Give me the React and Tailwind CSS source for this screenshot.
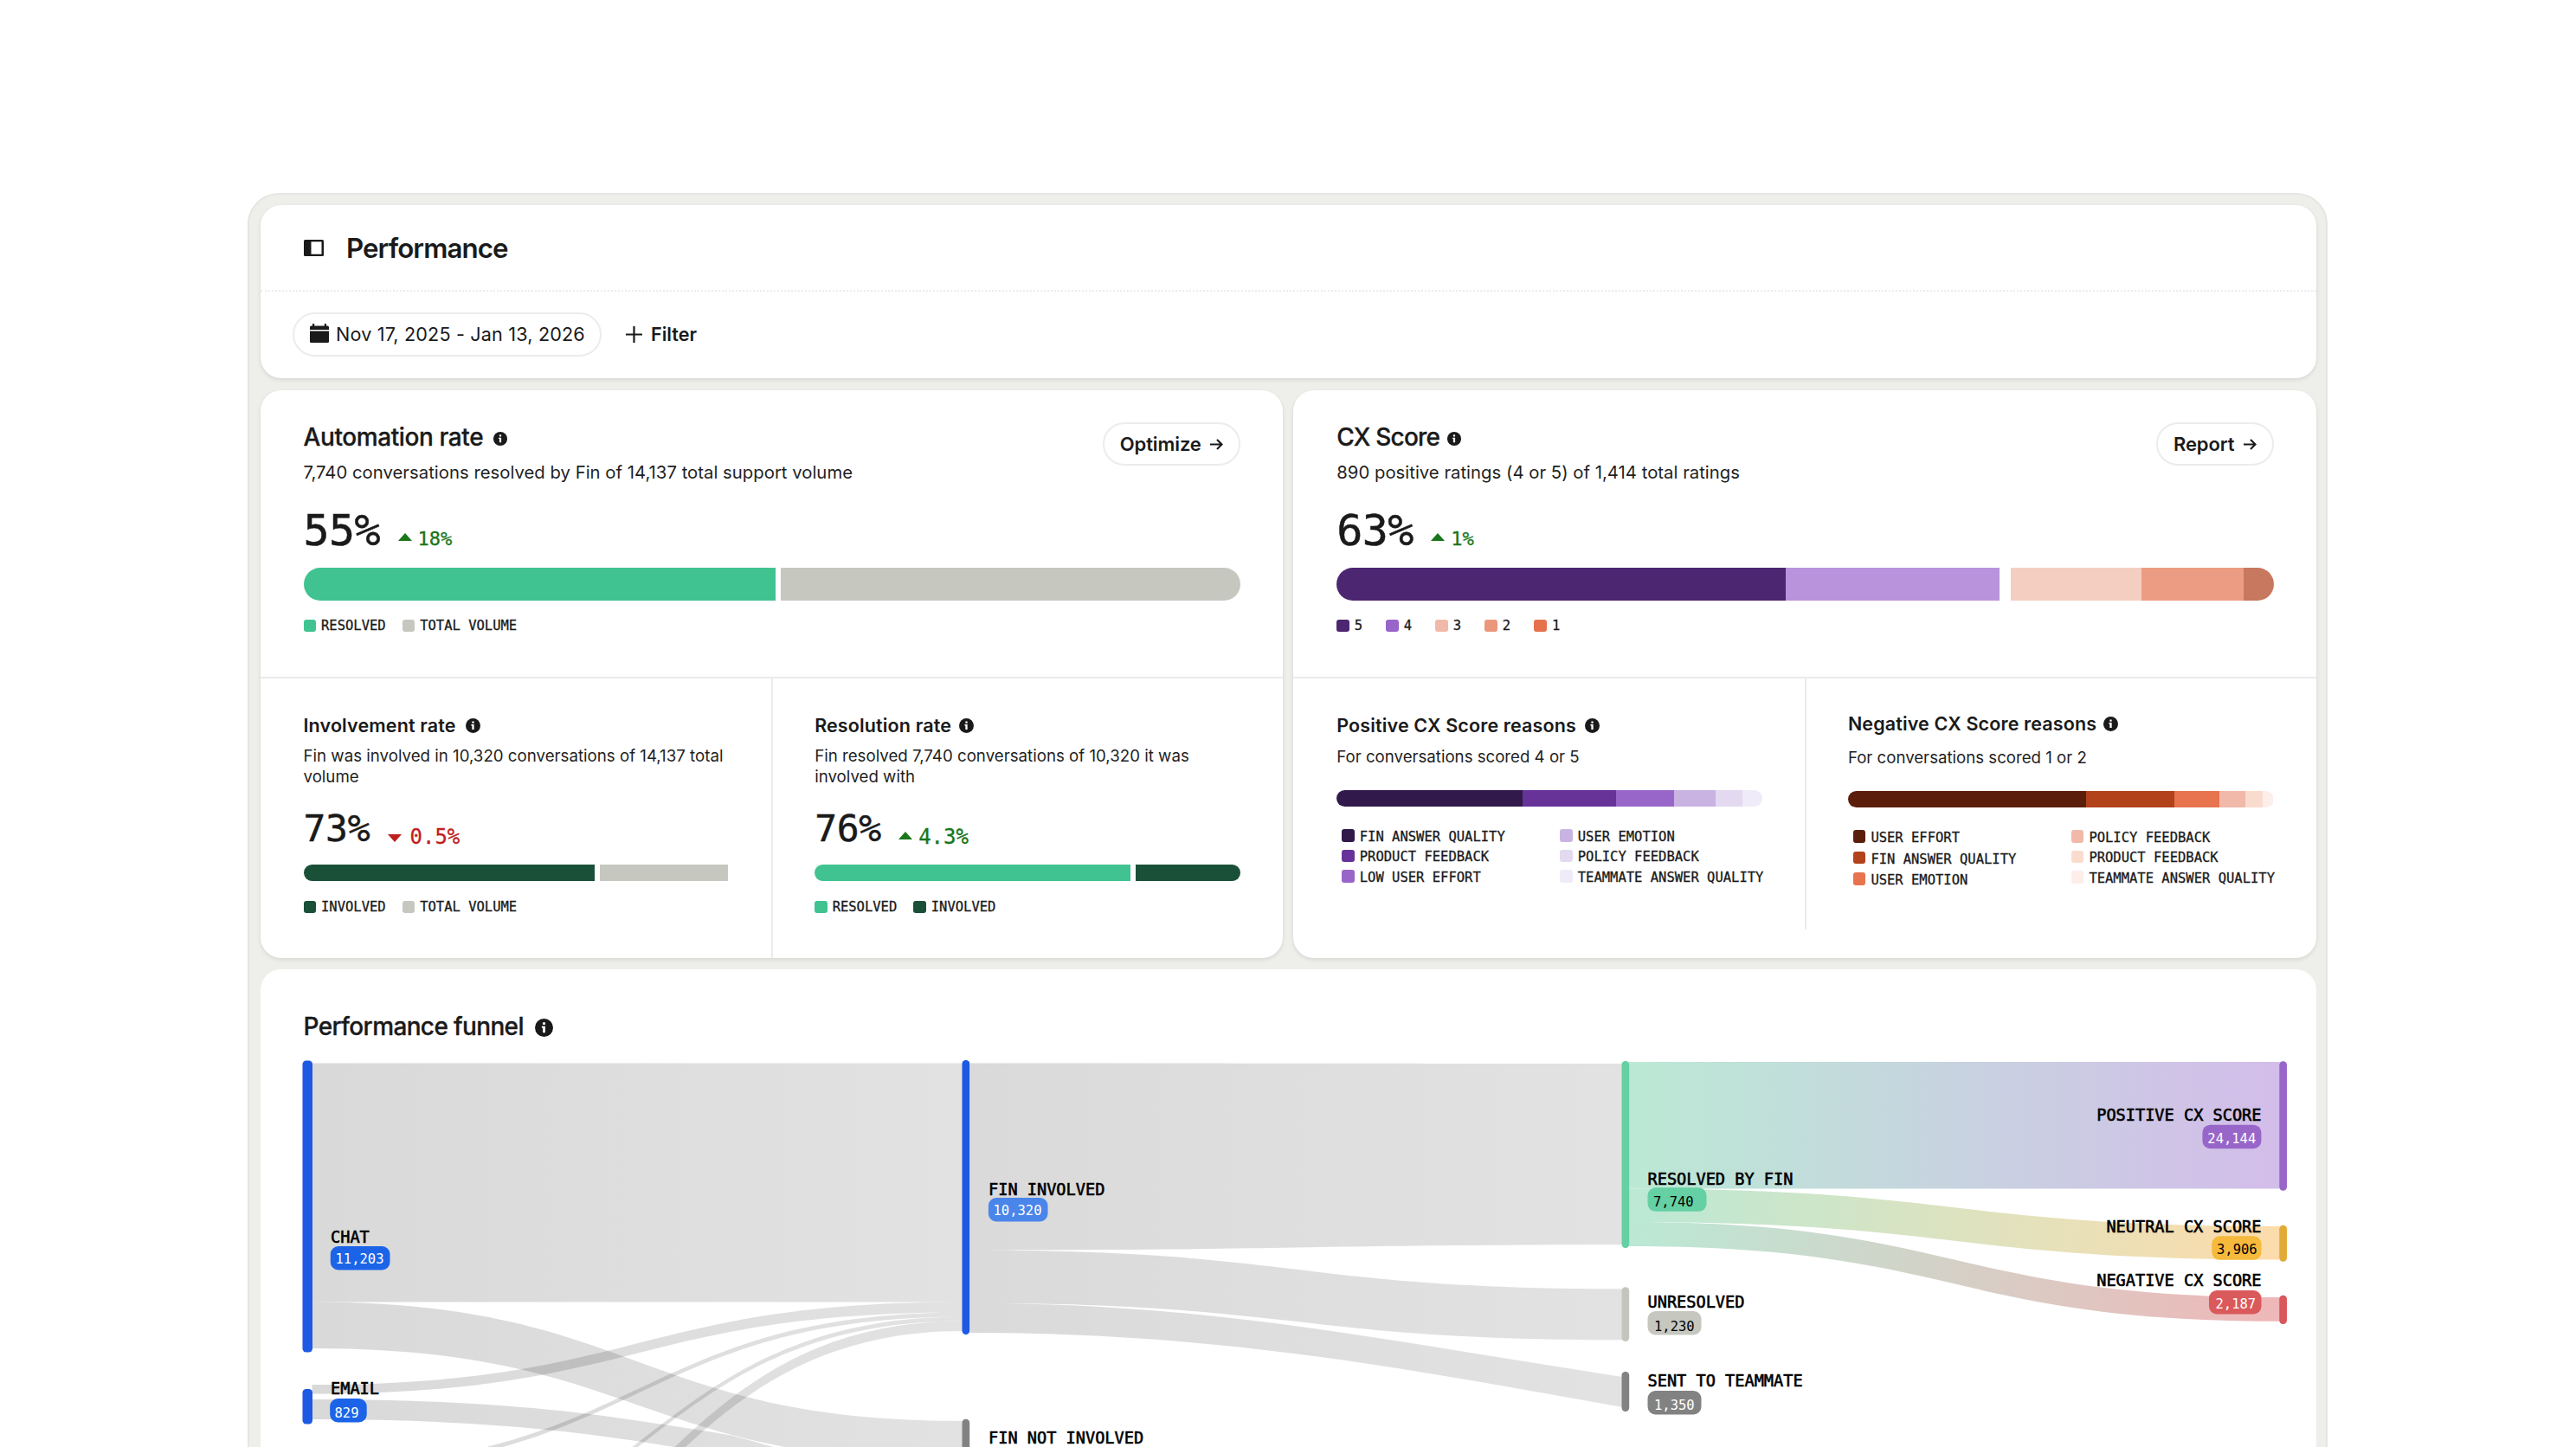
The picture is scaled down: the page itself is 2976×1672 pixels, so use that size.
const mono = "font-['DejaVu_Sans_Mono',monospace]"

const InfoIcon = ({ className }) => (
  <svg viewBox="0 0 16 16" className={className}>
    <circle cx="8" cy="8" r="8" fill="#1a1a1a" />
    <rect x="6.9" y="3.2" width="2.2" height="2.2" rx="0.4" fill="#fff" />
    <path d="M6 6.7h3.1v5.6H6.9V8.1H6z" fill="#fff" />
  </svg>
)

const ArrowRight = () => (
  <svg viewBox="0 0 15 13" className="w-[15px] h-[13px]" fill="none" stroke="#1a1a1a" strokeWidth="2.1">
    <path d="M0 6.5h13.4M8 0.9l5.6 5.6L8 12.1" />
  </svg>
)

const Swatch = ({ color, className }) => (
  <span className={`w-[14.5px] h-[14.5px] rounded-[3px] shrink-0 ${className}`} style={{ backgroundColor: color }} />
)

const LegendItem = ({ color, label, swatchClass = "" }) => (
  <div className="flex items-center gap-[6px] h-4">
    <Swatch color={color} className={swatchClass} />
    <span className={`${mono} text-[15.5px] leading-4 text-[#1a1a1a] whitespace-nowrap [-webkit-text-stroke:0.3px_#1a1a1a]`}>{label}</span>
  </div>
)

// parts: [width, color] pairs, a null color leaves a gap
const Bar = ({ parts, className }) => (
  <div className={`flex rounded-full overflow-hidden ${className}`}>
    {parts.map(([width, color], i) => (
      <div key={i} className="h-full shrink-0" style={{ width, backgroundColor: color || "#fff" }} />
    ))}
  </div>
)

const Triangle = ({ up, className }) => (
  <svg viewBox="0 0 16 9" className={`w-4 h-[9px] relative ${className}`}>
    <path d={up ? "M0 9L8 0l8 9z" : "M0 0h16L8 9z"} fill={up ? "#19761a" : "#c01f1f"} />
  </svg>
)

const PillButton = ({ children }) => (
  <button className="h-[50px] rounded-full border-2 border-[#ececec] flex items-center gap-[10px] pl-[17.5px] pr-[18px] text-[22px] font-semibold text-[#1a1a1a] tracking-[-0.1px]">
    {children}
    <ArrowRight />
  </button>
)

const ScoreCard = ({ title, titleClass, description, action, value, delta, parts, legend, legendGap, children }) => (
  <section className="bg-white rounded-[24px] h-[656px] shadow-[0_2px_5px_rgba(0,0,0,0.1)] flex flex-col">
    <div className="h-[333px] border-b-2 border-[#ebebeb] pl-[50px] pr-[49px] pt-[37px]">
      <div className="flex justify-between items-start h-[108px]">
        <div>
          <div className={`flex items-center ${titleClass}`}>
            <h2 className="text-[28px] leading-[34px] font-medium text-[#1a1a1a] [-webkit-text-stroke:0.3px_#1a1a1a]">{title}</h2>
            <InfoIcon className="w-4 h-4 mt-1" />
          </div>
          <p className="mt-[10px] text-[20.3px] leading-7 text-[#1f1f1f] tracking-[0.02px]">{description}</p>
        </div>
        <PillButton>{action}</PillButton>
      </div>
      <div className={`${mono} mt-[-8px] h-[50px] flex items-baseline text-[#1a1a1a]`}>
        <span className="text-[50px] leading-[50px] w-[109px] tracking-[-0.6px] [-webkit-text-stroke:0.5px_#1a1a1a]">{value}</span>
        <Triangle up className="bottom-[5px]" />
        <span className="text-[22px] leading-none text-[#19761a] ml-[7px] [-webkit-text-stroke:0.3px_#19761a]">{delta}</span>
      </div>
      <Bar parts={parts} className="mt-[18px] h-[38px]" />
      <div className={`mt-[21px] flex ${legendGap}`}>
        {legend.map(([label, color]) => <LegendItem key={label} label={label} color={color} />)}
      </div>
    </div>
    <div className="grid grid-cols-2 flex-1">{children}</div>
  </section>
)

const CellTitle = ({ title, iconGap }) => (
  <div className={`flex items-center ${iconGap}`}>
    <h3 className="text-[21.5px] leading-[26px] font-semibold text-[#1a1a1a] tracking-[0.14px] whitespace-nowrap">{title}</h3>
    <InfoIcon className="w-[17px] h-[17px] mt-px" />
  </div>
)

const RateCell = ({ title, iconGap, description, value, delta, up, parts, legend, className }) => (
  <div className={`pt-[41px] ${className}`}>
    <CellTitle title={title} iconGap={iconGap} />
    <p className="mt-[10.5px] w-[492px] text-[18.7px] leading-6 text-[#1f1f1f]">{description}</p>
    <div className={`${mono} mt-[26.5px] h-[43px] flex items-baseline text-[#1a1a1a]`}>
      <span className="text-[43px] leading-[43px] w-[97px] tracking-[-0.3px] [-webkit-text-stroke:0.5px_#1a1a1a]">{value}</span>
      <Triangle up={up} className={up ? "bottom-[2px]" : "top-px"} />
      <span className={`relative top-[3px] text-[24px] leading-none ${up ? "ml-[7px] text-[#19761a] [-webkit-text-stroke:0.3px_#19761a]" : "ml-[10px] text-[#c01f1f] [-webkit-text-stroke:0.3px_#c01f1f]"}`}>{delta}</span>
    </div>
    <Bar parts={parts} className="mt-5 h-[19px]" />
    <div className="mt-[22px] flex gap-[19px]">
      {legend.map(([label, color]) => <LegendItem key={label} label={label} color={color} />)}
    </div>
  </div>
)

const ReasonCell = ({ title, iconGap, textGap, leftRows, description, parts, columns, className }) => (
  <div className={`pr-[49px] ${className}`}>
    <CellTitle title={title} iconGap={iconGap} />
    <p className={`text-[18.65px] leading-6 text-[#1f1f1f] ${textGap}`}>{description}</p>
    <Bar parts={parts} className="mt-[27px] h-[19px]" />
    <div className="mt-[27px] ml-[6px] flex">
      {columns.map((col, i) => (
        <div key={i} className={`w-[252px] shrink-0 flex flex-col ${i === 0 ? leftRows : "gap-[7.4px]"}`}>
          {col.map(([label, color]) => <LegendItem key={label} label={label} color={color} swatchClass="-mt-[3px]" />)}
        </div>
      ))}
    </div>
  </div>
)

// ribbon between two columns, y0/y1 are the edges on the left, y2/y3 on the right
const ribbon = (x0, y0, y1, x1, y2, y3) => {
  const m = (x0 + x1) / 2
  return `M${x0} ${y0}C${m} ${y0} ${m} ${y2} ${x1} ${y2}V${y3}C${m} ${y3} ${m} ${y1} ${x0} ${y1}Z`
}

const links = [
  [ribbon(360, 1228.5, 1504.5, 1112, 1228.5, 1504.5), "gray1"],
  [ribbon(360, 1504.5, 1558, 1112, 1642, 1689), "gray1"],
  [ribbon(360, 1600, 1610.5, 1112, 1504.5, 1516.5), "gray1"],
  ["M360 1617C610 1617 720 1639 844 1658.5L870 1665.5L900 1674H790C680 1655 560 1640 360 1640Z", "gray1"],
  [ribbon(360, 1694, 1699, 1112, 1516.5, 1521.5), "gray1"],
  [ribbon(360, 1813, 1818, 1112, 1521.5, 1526.5), "gray1"],
  [ribbon(360, 1902, 1914, 1112, 1526.5, 1538), "gray1"],
  [ribbon(1120, 1228.5, 1444.5, 1874, 1229, 1438.3), "gray2"],
  [ribbon(1120, 1444.5, 1505.7, 1874, 1489.3, 1548.3), "gray2"],
  ["M1120 1505.7C1400 1505.7 1600 1549 1874 1591V1626C1600 1577 1400 1540 1120 1540Z", "gray2"],
  [ribbon(1881, 1227, 1373.5, 2633, 1227, 1373.5), "positive"],
  [ribbon(1881, 1373.5, 1412, 2633, 1417, 1455.5), "neutral"],
  [ribbon(1881, 1412, 1440, 2633, 1499, 1526.7), "negative"],
]

const gradients = [
  ["gray1", 360, 1112, "rgba(0,0,0,0.15)", "rgba(0,0,0,0.115)"],
  ["gray2", 1120, 1874, "rgba(0,0,0,0.145)", "rgba(0,0,0,0.115)"],
  ["positive", 1881, 2633, "#bbe9d5", "#d3bdea"],
  ["neutral", 1881, 2633, "#bbe9d5", "#fddcab"],
  ["negative", 1881, 2633, "#bbe9d5", "#efb7b8"],
]

// x, top, bottom, width, color
const nodes = [
  [349, 1225.5, 1562.5, 11.5, "#1d59e3"],
  [349, 1605, 1645.5, 11.5, "#1d59e3"],
  [1111, 1225, 1542, 8.7, "#1d59e3"],
  [1111, 1639.7, 1700, 8.7, "#828282"],
  [1873, 1226, 1442, 8.7, "#65d0a3"],
  [1873, 1487.3, 1550, 8.7, "#c4c6be"],
  [1873, 1585, 1631, 8.7, "#828282"],
  [2632.7, 1226.3, 1375.7, 8.8, "#9866c9"],
  [2632.7, 1415.7, 1457.7, 8.8, "#e2ab37"],
  [2632.7, 1496.7, 1530, 8.8, "#d9585b"],
]

const labels = [
  { text: "CHAT", x: 381.5, y: 1436, badge: [381.3, 1440, 68.7], value: "11,203", vx: 387, vy: 1460, bg: "#1b64e8", color: "#fff" },
  { text: "EMAIL", x: 381.5, y: 1611, badge: [380.7, 1616, 42.5], value: "829", vx: 386, vy: 1638.3, bg: "#1b64e8", color: "#fff" },
  { text: "FIN INVOLVED", x: 1141.5, y: 1381, badge: [1141.4, 1384, 68.6], value: "10,320", vx: 1147, vy: 1404.3, bg: "#4a85ea", color: "#fff" },
  { text: "FIN NOT INVOLVED", x: 1141.5, y: 1668.3 },
  { text: "RESOLVED BY FIN", x: 1903, y: 1368.7, badge: [1903, 1372.3, 68], value: "7,740", vx: 1909.5, vy: 1393.7, bg: "#65d0a3", color: "#000" },
  { text: "UNRESOLVED", x: 1903, y: 1510.7, badge: [1903, 1515, 62], value: "1,230", vx: 1910.5, vy: 1537.7, bg: "#c6c8c0", color: "#000" },
  { text: "SENT TO TEAMMATE", x: 1903, y: 1602.3, badge: [1903, 1607, 62], value: "1,350", vx: 1910.5, vy: 1629.3, bg: "#828282", color: "#fff" },
  { text: "POSITIVE CX SCORE", x: 2612, y: 1295.3, end: true, badge: [2543.9, 1299.7, 68], value: "24,144", vx: 2549.8, vy: 1321, bg: "#9866c9", color: "#fff" },
  { text: "NEUTRAL CX SCORE", x: 2612, y: 1424, end: true, badge: [2554.8, 1428.3, 57.2], value: "3,906", vx: 2560.5, vy: 1449, bg: "#f6b93b", color: "#000" },
  { text: "NEGATIVE CX SCORE", x: 2612, y: 1486.3, end: true, badge: [2551.5, 1491, 60.5], value: "2,187", vx: 2559, vy: 1511.7, bg: "#da5a5c", color: "#fff" },
]

const Funnel = () => (
  <svg viewBox="300.5 1210 2375 462" className="w-[2375px] h-[462px] block">
    <defs>
      {gradients.map(([id, x1, x2, from, to]) => (
        <linearGradient key={id} id={id} gradientUnits="userSpaceOnUse" x1={x1} x2={x2} y1="0" y2="0">
          <stop offset="0" stopColor={from} />
          <stop offset="1" stopColor={to} />
        </linearGradient>
      ))}
    </defs>
    {links.map(([d, fill], i) => <path key={i} d={d} fill={`url(#${fill})`} />)}
    {nodes.map(([x, top, bottom, width, fill]) => (
      <rect key={`${x}-${top}`} x={x} y={top} width={width} height={bottom - top} rx="4.2" fill={fill} />
    ))}
    {labels.map((l) => (
      <g key={l.text} className={mono}>
        <text x={l.x} y={l.y} textAnchor={l.end ? "end" : "start"} className="text-[18.6px]" stroke="#000" strokeWidth="0.6">{l.text}</text>
        {l.badge && (
          <>
            <rect x={l.badge[0]} y={l.badge[1]} width={l.badge[2]} height="27.5" rx="9" fill={l.bg} />
            <text x={l.vx} y={l.vy} fill={l.color} className="text-[15.5px]">{l.value}</text>
          </>
        )}
      </g>
    ))}
  </svg>
)

export default function App() {
  return (
    <div className="w-[2976px] h-[1672px] bg-white overflow-hidden pt-[223px] pl-[286px] font-['Inter',sans-serif]">
      <div className="w-[2403px] h-[1520px] rounded-t-[36px] border-2 border-[#e5e5e3] bg-[#eeeeeb] pl-[12.5px] pr-[11.5px] pt-[11.5px]">

        {/* Header */}
        <header className="bg-white rounded-[24px] h-[200.5px] shadow-[0_2px_5px_rgba(0,0,0,0.1)]">
          <div className="h-[100px] border-b-2 border-dotted border-[#ececec] flex items-center pl-[50.5px] pt-[3px]">
            <svg viewBox="0 0 23 19" className="w-[23px] h-[19px] mb-[2px]">
              <rect width="23" height="19" rx="1.5" fill="#1a1a1a" />
              <rect x="8.5" y="2.3" width="12" height="14.4" fill="#fff" />
            </svg>
            <h1 className="ml-[26px] text-[31.3px] leading-10 font-semibold text-[#1a1a1a] tracking-[-0.92px]">Performance</h1>
          </div>
          <div className="h-[100px] flex items-center pl-[37.5px]">
            <button className="h-[51px] w-[357px] rounded-full border-2 border-[#ececec] flex items-center pl-[18px] text-[21.6px] tracking-[0.17px] text-[#1a1a1a]">
              <svg viewBox="0 0 22 22" className="w-[22px] h-[22px] mr-2 shrink-0 mb-[3px]" fill="#1a1a1a">
                <path d="M3 0h2.2v2.4h11.6V0H19v2.4h1.5a1.5 1.5 0 0 1 1.5 1.5V7H0V3.9a1.5 1.5 0 0 1 1.5-1.5H3z" />
                <path d="M0 8.6h22v11.9a1.5 1.5 0 0 1-1.5 1.5h-19A1.5 1.5 0 0 1 0 20.5z" />
              </svg>
              <span className="whitespace-nowrap">Nov 17, 2025 - Jan 13, 2026</span>
            </button>
            <button className="ml-[28px] flex items-center gap-[10px] text-[21.6px] font-semibold text-[#1a1a1a]">
              <svg viewBox="0 0 19 19" className="w-[19px] h-[19px]" stroke="#1a1a1a" strokeWidth="2.2">
                <path d="M9.5 0v19M0 9.5h19" />
              </svg>
              Filter
            </button>
          </div>
        </header>

        {/* Scores */}
        <div className="grid grid-cols-2 gap-[12.5px] mt-[14px]">
          <ScoreCard
            title="Automation rate"
            titleClass="gap-[12px] tracking-[-0.4px]"
            description="7,740 conversations resolved by Fin of 14,137 total support volume"
            action="Optimize"
            value="55%"
            delta="18%"
            parts={[[545, "#40c390"], [6.5, null], [540, "#c6c8c0"]]}
            legend={[["RESOLVED", "#40c390"], ["TOTAL VOLUME", "#c6c8c0"]]}
            legendGap="gap-[19px]"
          >
            <RateCell
              className="pl-[50px]"
              title="Involvement rate"
              iconGap="gap-[11px]"
              description="Fin was involved in 10,320 conversations of 14,137 total volume"
              value="73%"
              delta="0.5%"
              parts={[[336.5, "#1a4f38"], [6, null], [148, "#c6c8c0"]]}
              legend={[["INVOLVED", "#1a4f38"], ["TOTAL VOLUME", "#c6c8c0"]]}
            />
            <RateCell
              className="pl-[48px] pr-[49px] border-l-2 border-[#ebebeb]"
              title="Resolution rate"
              iconGap="gap-[9px]"
              description="Fin resolved 7,740 conversations of 10,320 it was involved with"
              value="76%"
              delta="4.3%"
              up
              parts={[[364.5, "#40c390"], [6, null], [122, "#1a4f38"]]}
              legend={[["RESOLVED", "#40c390"], ["INVOLVED", "#1a4f38"]]}
            />
          </ScoreCard>

          <ScoreCard
            title="CX Score"
            titleClass="gap-[9px] tracking-[-0.8px]"
            description="890 positive ratings (4 or 5) of 1,414 total ratings"
            action="Report"
            value="63%"
            delta="1%"
            parts={[[518.5, "#4c2670"], [247.5, "#b993db"], [12.5, null], [151, "#f4cfc1"], [118.5, "#ec9c82"], [40, "#c7785f"]]}
            legend={[["5", "#4c2670"], ["4", "#9866c9"], ["3", "#f1b9aa"], ["2", "#ec977c"], ["1", "#e5724c"]]}
            legendGap="gap-[27.2px]"
          >
            <ReasonCell
              className="pl-[50px] pt-[41px]"
              title="Positive CX Score reasons"
              iconGap="gap-[10px]"
              textGap="mt-[11px]"
              leftRows="gap-[7.4px]"
              description="For conversations scored 4 or 5"
              parts={[[215, "#32194c"], [107.5, "#673399"], [67, "#9866c9"], [48.5, "#c9b3e3"], [30.5, "#e3d9f0"], [23, "#f0ebf8"]]}
              columns={[
                [["FIN ANSWER QUALITY", "#32194c"], ["PRODUCT FEEDBACK", "#673399"], ["LOW USER EFFORT", "#9866c9"]],
                [["USER EMOTION", "#c9b3e3"], ["POLICY FEEDBACK", "#e3d9f0"], ["TEAMMATE ANSWER QUALITY", "#f0ebf8"]],
              ]}
            />
            <ReasonCell
              className="pl-[48px] pt-[39px] h-[290px] border-l-2 border-[#ebebeb]"
              title="Negative CX Score reasons"
              iconGap="gap-[8px]"
              textGap="mt-[14px]"
              leftRows="gap-[8.6px]"
              description="For conversations scored 1 or 2"
              parts={[[275, "#5b1e0a"], [102.5, "#b2421a"], [52, "#e7734f"], [29.5, "#f1b9a9"], [20.5, "#fadccf"], [12, "#fdeeea"]]}
              columns={[
                [["USER EFFORT", "#5b1e0a"], ["FIN ANSWER QUALITY", "#b2421a"], ["USER EMOTION", "#e7734f"]],
                [["POLICY FEEDBACK", "#f1b9a9"], ["PRODUCT FEEDBACK", "#fadccf"], ["TEAMMATE ANSWER QUALITY", "#fdeeea"]],
              ]}
            />
          </ScoreCard>
        </div>

        {/* Funnel */}
        <section className="bg-white rounded-t-[24px] mt-[13px] h-[600px]">
          <div className="h-[90px] pl-[50px] pt-[49px] flex items-start gap-[13px]">
            <h2 className="text-[28px] leading-[34px] font-medium text-[#1a1a1a] tracking-[-0.64px] [-webkit-text-stroke:0.3px_#1a1a1a]">Performance funnel</h2>
            <InfoIcon className="w-[21px] h-[21px] mt-[8px]" />
          </div>
          <Funnel />
        </section>
      </div>
    </div>
  )
}
